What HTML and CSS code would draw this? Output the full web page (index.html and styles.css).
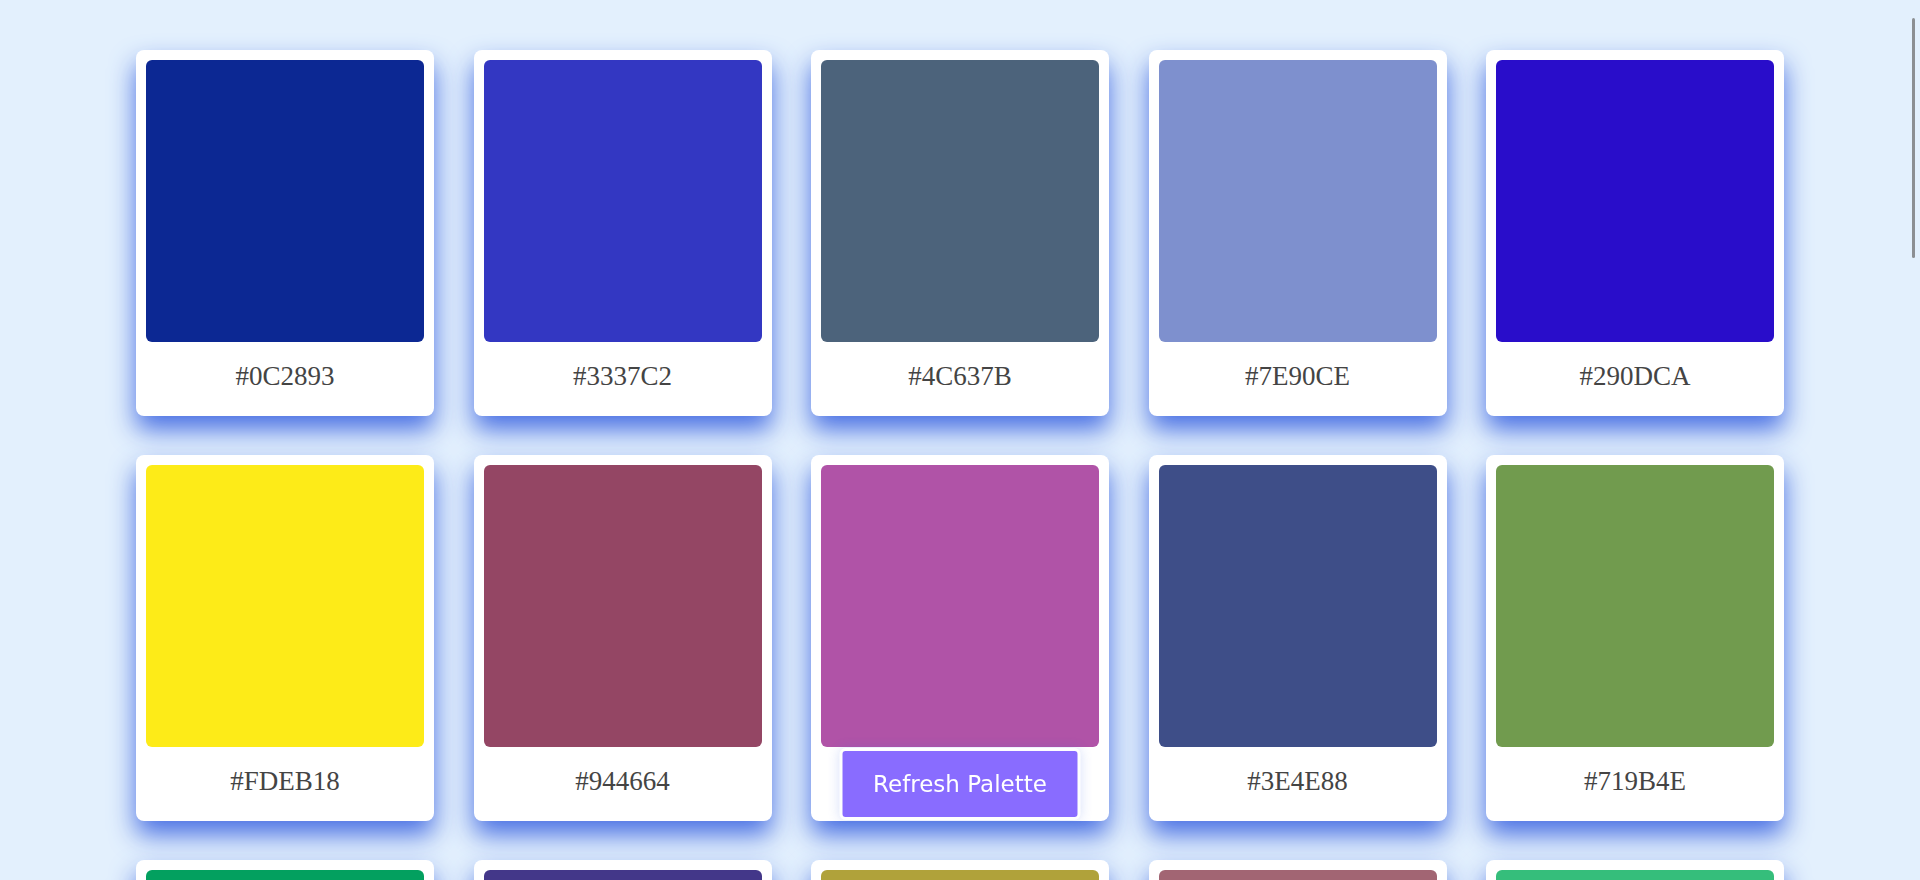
FILE: index.html
```html
<!DOCTYPE html>
<html lang="en">
<head>
<meta charset="utf-8">
<title>Palette</title>
<link rel="stylesheet" href="styles.css">
</head>
<body>
<main class="palette">
  <div class="card"><div class="swatch" style="background:#0C2893"></div><p class="hex">#0C2893</p></div>
  <div class="card"><div class="swatch" style="background:#3337C2"></div><p class="hex">#3337C2</p></div>
  <div class="card"><div class="swatch" style="background:#4C637B"></div><p class="hex">#4C637B</p></div>
  <div class="card"><div class="swatch" style="background:#7E90CE"></div><p class="hex">#7E90CE</p></div>
  <div class="card"><div class="swatch" style="background:#290DCA"></div><p class="hex">#290DCA</p></div>
  <div class="card"><div class="swatch" style="background:#FDEB18"></div><p class="hex">#FDEB18</p></div>
  <div class="card"><div class="swatch" style="background:#944664"></div><p class="hex">#944664</p></div>
  <div class="card"><div class="swatch" style="background:#B053A7"></div><p class="hex">#B053A7</p></div>
  <div class="card"><div class="swatch" style="background:#3E4E88"></div><p class="hex">#3E4E88</p></div>
  <div class="card"><div class="swatch" style="background:#719B4E"></div><p class="hex">#719B4E</p></div>
  <div class="card"><div class="swatch" style="background:#03A05F"></div><p class="hex">#03A05F</p></div>
  <div class="card"><div class="swatch" style="background:#433789"></div><p class="hex">#433789</p></div>
  <div class="card"><div class="swatch" style="background:#B0A23A"></div><p class="hex">#B0A23A</p></div>
  <div class="card"><div class="swatch" style="background:#A26573"></div><p class="hex">#A26573</p></div>
  <div class="card"><div class="swatch" style="background:#35BE7B"></div><p class="hex">#35BE7B</p></div>
  <div class="card"><div class="swatch" style="background:#5A2D81"></div><p class="hex">#5A2D81</p></div>
  <div class="card"><div class="swatch" style="background:#E07A3F"></div><p class="hex">#E07A3F</p></div>
  <div class="card"><div class="swatch" style="background:#1F8FA6"></div><p class="hex">#1F8FA6</p></div>
  <div class="card"><div class="swatch" style="background:#C23B5E"></div><p class="hex">#C23B5E</p></div>
  <div class="card"><div class="swatch" style="background:#6D9E2B"></div><p class="hex">#6D9E2B</p></div>
  <div class="card"><div class="swatch" style="background:#2E4A9C"></div><p class="hex">#2E4A9C</p></div>
  <div class="card"><div class="swatch" style="background:#D4B84A"></div><p class="hex">#D4B84A</p></div>
  <div class="card"><div class="swatch" style="background:#7B3F2C"></div><p class="hex">#7B3F2C</p></div>
  <div class="card"><div class="swatch" style="background:#49C1D8"></div><p class="hex">#49C1D8</p></div>
  <div class="card"><div class="swatch" style="background:#8E5BB7"></div><p class="hex">#8E5BB7</p></div>
  <div class="card"><div class="swatch" style="background:#3C7A55"></div><p class="hex">#3C7A55</p></div>
  <div class="card"><div class="swatch" style="background:#F25C8A"></div><p class="hex">#F25C8A</p></div>
  <div class="card"><div class="swatch" style="background:#1A2B4C"></div><p class="hex">#1A2B4C</p></div>
  <div class="card"><div class="swatch" style="background:#A8C23D"></div><p class="hex">#A8C23D</p></div>
  <div class="card"><div class="swatch" style="background:#6B6FD1"></div><p class="hex">#6B6FD1</p></div>
  <div class="card"><div class="swatch" style="background:#C9733B"></div><p class="hex">#C9733B</p></div>
  <div class="card"><div class="swatch" style="background:#2D9C8E"></div><p class="hex">#2D9C8E</p></div>
  <div class="card"><div class="swatch" style="background:#912A6E"></div><p class="hex">#912A6E</p></div>
  <div class="card"><div class="swatch" style="background:#5E8FD3"></div><p class="hex">#5E8FD3</p></div>
  <div class="card"><div class="swatch" style="background:#B4463B"></div><p class="hex">#B4463B</p></div>
  <div class="card"><div class="swatch" style="background:#4D3A9F"></div><p class="hex">#4D3A9F</p></div>
  <div class="card"><div class="swatch" style="background:#77B06A"></div><p class="hex">#77B06A</p></div>
  <div class="card"><div class="swatch" style="background:#E3C02F"></div><p class="hex">#E3C02F</p></div>
  <div class="card"><div class="swatch" style="background:#3B5D6E"></div><p class="hex">#3B5D6E</p></div>
  <div class="card"><div class="swatch" style="background:#A15CC4"></div><p class="hex">#A15CC4</p></div>
</main>
<button class="refresh" type="button">Refresh Palette</button>
<div class="scroll-thumb" aria-hidden="true"></div>
</body>
</html>
```
FILE: styles.css
```css
html, body {
  margin: 0;
  padding: 0;
  background: #e3f0fd;
}

body {
  font-family: "Liberation Serif", "Times New Roman", serif;
}

.palette {
  display: grid;
  grid-template-columns: repeat(5, 298px);
  column-gap: 39.5px;
  row-gap: 39px;
  justify-content: center;
  padding: 50px 0 50px;
}

.card {
  background: #ffffff;
  border-radius: 8px;
  padding: 10px;
  box-shadow: 0 14px 26px rgba(65, 105, 225, 0.95);
}

.swatch {
  height: 282px;
  border-radius: 6px;
}

.hex {
  margin: 0;
  padding: 19px 0 14px;
  font-size: 27px;
  line-height: 31px;
  text-align: center;
  color: #444444;
}

.refresh {
  position: fixed;
  left: 50%;
  bottom: 60px;
  transform: translateX(-50%);
  box-sizing: border-box;
  width: 241px;
  height: 72px;
  padding: 0 10px;
  border: 3px solid #ffffff;
  border-radius: 6px;
  background: #896cff;
  color: #ffffff;
  font-family: "DejaVu Sans", Verdana, sans-serif;
  font-size: 23px;
  box-shadow: 0 0 12px rgba(65, 105, 225, 0.2);
  cursor: pointer;
}

.scroll-thumb {
  position: fixed;
  top: 18px;
  right: 5px;
  width: 3px;
  height: 240px;
  border-radius: 2px;
  background: #8c8f93;
}
```
